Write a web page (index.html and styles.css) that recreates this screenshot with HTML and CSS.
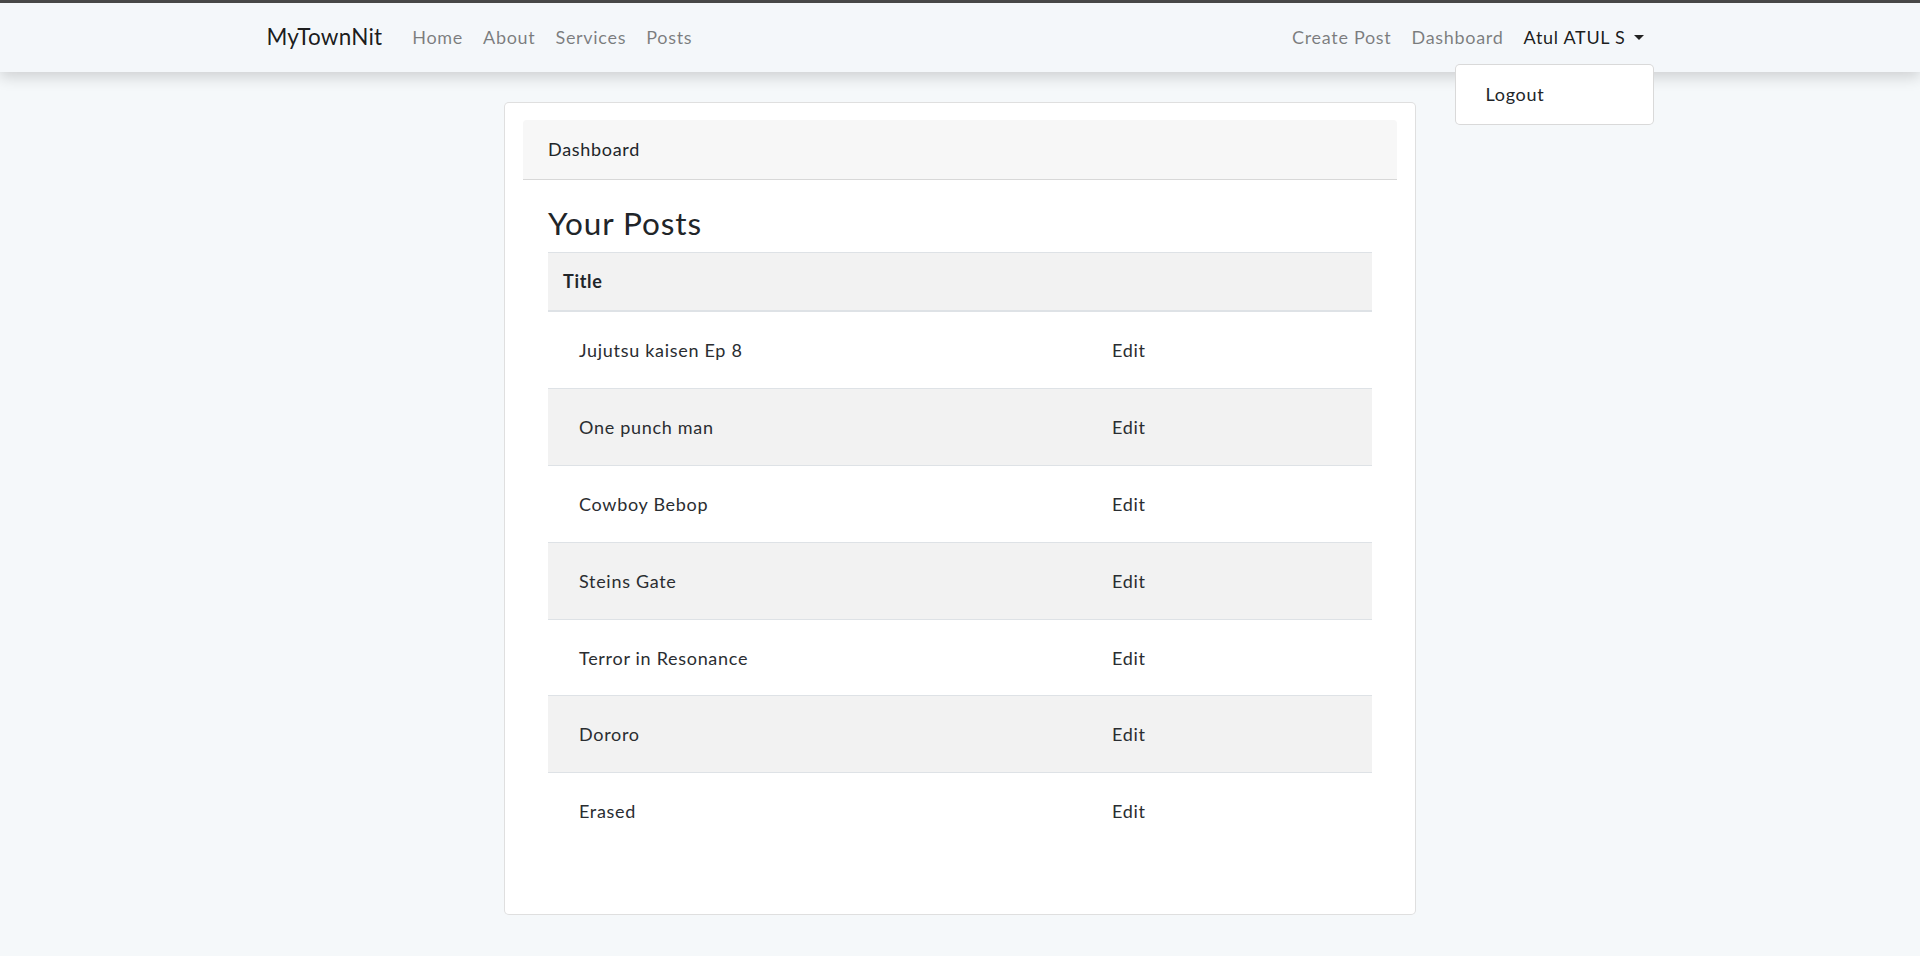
FILE: index.html
```html
<!DOCTYPE html>
<html lang="en">
<head>
<meta charset="utf-8">
<title>MyTownNit</title>
<link rel="stylesheet" href="styles.css">
</head>
<body>
<div class="topline"></div>
<nav class="navbar">
  <div class="container nav-inner">
    <div class="nav-left">
      <a class="brand" href="#">MyTownNit</a>
      <ul class="nav">
        <li><a class="nav-link" href="#">Home</a></li>
        <li><a class="nav-link" href="#">About</a></li>
        <li><a class="nav-link" href="#">Services</a></li>
        <li><a class="nav-link" href="#">Posts</a></li>
      </ul>
    </div>
    <ul class="nav">
      <li><a class="nav-link" href="#">Create Post</a></li>
      <li><a class="nav-link" href="#">Dashboard</a></li>
      <li class="dropdown">
        <a class="nav-link user" href="#">Atul ATUL S<span class="caret"></span></a>
        <div class="dropdown-menu"><a class="dropdown-item" href="#">Logout</a></div>
      </li>
    </ul>
  </div>
</nav>
<main class="main">
  <div class="card">
    <div class="card-header">Dashboard</div>
    <div class="card-body">
      <h3 class="title">Your Posts</h3>
      <table class="table">
        <thead>
          <tr><th class="col-title">Title</th><th></th></tr>
        </thead>
        <tbody>
          <tr><td>Jujutsu kaisen Ep 8</td><td>Edit</td></tr>
          <tr><td>One punch man</td><td>Edit</td></tr>
          <tr><td>Cowboy Bebop</td><td>Edit</td></tr>
          <tr><td>Steins Gate</td><td>Edit</td></tr>
          <tr><td>Terror in Resonance</td><td>Edit</td></tr>
          <tr><td>Dororo</td><td>Edit</td></tr>
          <tr><td>Erased</td><td>Edit</td></tr>
        </tbody>
      </table>
    </div>
  </div>
</main>
</body>
</html>
```
FILE: styles.css
```css
* { box-sizing: border-box; }
html, body { margin: 0; padding: 0; }
body {
  background: #f5f8fa;
  font-family: Lato, "Open Sans", sans-serif;
  font-size: 18px;
  line-height: 28.8px;
  color: #212529;
  letter-spacing: 0.7px;
}
a { text-decoration: none; color: inherit; }
.topline { height: 3px; background: #4a4a4a; }
.navbar {
  background: #f4f7fa;
  padding: 10px 0;
  box-shadow: 0 5px 14px rgba(0,0,0,0.16);
  position: relative;
  z-index: 2;
}
.container { width: 1387px; margin: 0 auto; }
.nav-inner { display: flex; justify-content: space-between; align-items: center; }
.nav-left { display: flex; align-items: center; }
.brand {
  font-size: 22.5px;
  color: rgba(0,0,0,0.9);
  margin-right: 20px;
  line-height: 30px;
  letter-spacing: 0.2px;
}
.nav { display: flex; list-style: none; margin: 0; padding: 0; }
.nav-link {
  display: block;
  padding: 10px 10px;
  color: rgba(0,0,0,0.5);
}
.nav-link.user { color: rgba(0,0,0,0.9); }
.caret {
  display: inline-block;
  margin-left: 8px;
  vertical-align: 4px;
  border-top: 5.4px solid #222;
  border-left: 5.4px solid transparent;
  border-right: 5.4px solid transparent;
}
.dropdown { position: relative; }
.dropdown-menu {
  position: absolute;
  right: 0;
  top: 100%;
  margin-top: 2px;
  width: 199px;
  background: #fff;
  border: 1px solid rgba(0,0,0,0.15);
  border-radius: 5px;
  padding: 10px 0;
}
.dropdown-item { display: block; padding: 5px 30px; color: #212529; }
.main { padding: 30px 0 30px; }
.card {
  width: 912px;
  margin: 0 auto;
  background: #fff;
  border: 1px solid rgba(0,0,0,0.125);
  border-radius: 5px;
  padding: 17px 18px 17px 18px;
}
.card-header {
  background: #f7f7f7;
  border-bottom: 1px solid rgba(0,0,0,0.125);
  padding: 15px 25px;
  border-radius: 4px 4px 0 0;
}
.card-body { padding: 25px 25px 28px; }
.title {
  margin: 0 0 10px;
  font-size: 31.5px;
  font-weight: 400;
  line-height: 37.8px;
  color: #212529;
  letter-spacing: 0.9px;
}
.table { width: 100%; border-collapse: collapse; margin-bottom: 20px; }
.table th {
  text-align: left;
  font-weight: 700;
  padding: 15px;
  border-top: 1px solid #dee2e6;
  border-bottom: 2px solid #dee2e6;
  background: #f2f2f2;
  line-height: 27px;
}
.col-title { width: 533px; }
.table td {
  padding: 24px 15px 23px 31px;
  border-top: 1px solid #dee2e6;
  color: #2a2d31;
}
.table tbody tr:first-child td { border-top: 0; }
.table tbody tr:nth-child(even) { background: #f2f2f2; }
```
